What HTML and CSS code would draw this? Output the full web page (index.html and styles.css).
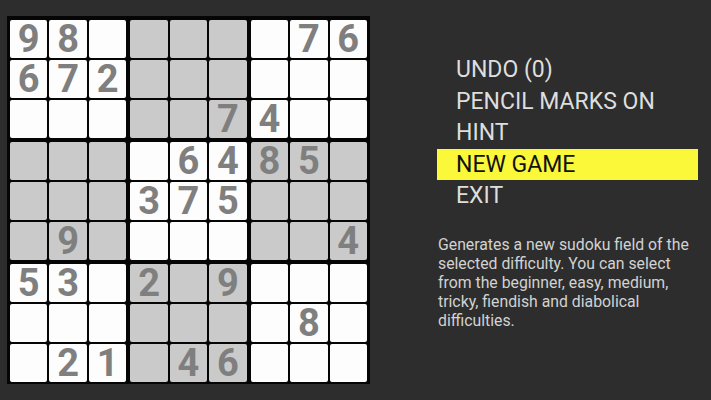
FILE: index.html
```html
<!DOCTYPE html>
<html lang="en">
<head>
<meta charset="utf-8">
<title>Sudoku</title>
<link rel="stylesheet" href="styles.css">
</head>
<body>
<main class="screen">
  <div class="board">
    <div class="box">
      <div class="cell">9</div><div class="cell">8</div><div class="cell"></div>
      <div class="cell">6</div><div class="cell">7</div><div class="cell">2</div>
      <div class="cell"></div><div class="cell"></div><div class="cell"></div>
    </div>
    <div class="box shaded">
      <div class="cell"></div><div class="cell"></div><div class="cell"></div>
      <div class="cell"></div><div class="cell"></div><div class="cell"></div>
      <div class="cell"></div><div class="cell"></div><div class="cell">7</div>
    </div>
    <div class="box">
      <div class="cell"></div><div class="cell">7</div><div class="cell">6</div>
      <div class="cell"></div><div class="cell"></div><div class="cell"></div>
      <div class="cell">4</div><div class="cell"></div><div class="cell"></div>
    </div>
    <div class="box shaded">
      <div class="cell"></div><div class="cell"></div><div class="cell"></div>
      <div class="cell"></div><div class="cell"></div><div class="cell"></div>
      <div class="cell"></div><div class="cell">9</div><div class="cell"></div>
    </div>
    <div class="box">
      <div class="cell"></div><div class="cell">6</div><div class="cell">4</div>
      <div class="cell">3</div><div class="cell">7</div><div class="cell">5</div>
      <div class="cell"></div><div class="cell"></div><div class="cell"></div>
    </div>
    <div class="box shaded">
      <div class="cell">8</div><div class="cell">5</div><div class="cell"></div>
      <div class="cell"></div><div class="cell"></div><div class="cell"></div>
      <div class="cell"></div><div class="cell"></div><div class="cell">4</div>
    </div>
    <div class="box">
      <div class="cell">5</div><div class="cell">3</div><div class="cell"></div>
      <div class="cell"></div><div class="cell"></div><div class="cell"></div>
      <div class="cell"></div><div class="cell">2</div><div class="cell">1</div>
    </div>
    <div class="box shaded">
      <div class="cell">2</div><div class="cell"></div><div class="cell">9</div>
      <div class="cell"></div><div class="cell"></div><div class="cell"></div>
      <div class="cell"></div><div class="cell">4</div><div class="cell">6</div>
    </div>
    <div class="box">
      <div class="cell"></div><div class="cell"></div><div class="cell"></div>
      <div class="cell"></div><div class="cell">8</div><div class="cell"></div>
      <div class="cell"></div><div class="cell"></div><div class="cell"></div>
    </div>
  </div>

  <aside class="panel">
    <ul class="menu">
      <li class="menu-item">UNDO (0)</li>
      <li class="menu-item">PENCIL MARKS ON</li>
      <li class="menu-item">HINT</li>
      <li class="menu-item selected">NEW GAME</li>
      <li class="menu-item">EXIT</li>
    </ul>
    <p class="description">Generates a new sudoku field of the selected difficulty. You can select from the beginner, easy, medium, tricky, fiendish and diabolical difficulties.</p>
  </aside>
</main>
</body>
</html>
```

FILE: styles.css
```css
html, body {
  margin: 0;
  padding: 0;
}

body {
  background: #2d2d2d;
  font-family: Roboto, "Liberation Sans", sans-serif;
  width: 711px;
  height: 400px;
  overflow: hidden;
}

.screen {
  display: flex;
  align-items: flex-start;
}

.board {
  margin: 16px 0 0 7px;
  width: 363px;
  height: 368px;
  box-sizing: border-box;
  padding: 4px 3px;
  background: #050505;
  display: grid;
  grid-template-columns: repeat(3, 1fr);
  grid-template-rows: repeat(3, 1fr);
  gap: 4px;
}

.box {
  display: grid;
  grid-template-columns: repeat(3, 1fr);
  grid-template-rows: repeat(3, 1fr);
  gap: 2px;
}

.cell {
  background: #fdfdfd;
  border-radius: 2px;
  display: flex;
  align-items: center;
  justify-content: center;
  font-family: Roboto, "Liberation Sans", sans-serif;
  font-weight: 700;
  font-size: 38px;
  color: #7f7f7f;
  line-height: 1;
}

.shaded .cell {
  background: #cacaca;
}

.panel {
  margin-left: 67px;
  width: 261px;
  padding-top: 54px;
}

.menu {
  list-style: none;
  margin: 0;
  padding: 0;
}

.menu-item {
  height: 31.6px;
  line-height: 31.6px;
  padding-left: 19px;
  font-size: 23px;
  color: #dedede;
  white-space: nowrap;
}

.menu-item.selected {
  background: #fbf83a;
  color: #111;
}

.description {
  margin: 23px 0 0 1px;
  font-size: 15.8px;
  line-height: 19px;
  color: #d2d2d2;
}
```
